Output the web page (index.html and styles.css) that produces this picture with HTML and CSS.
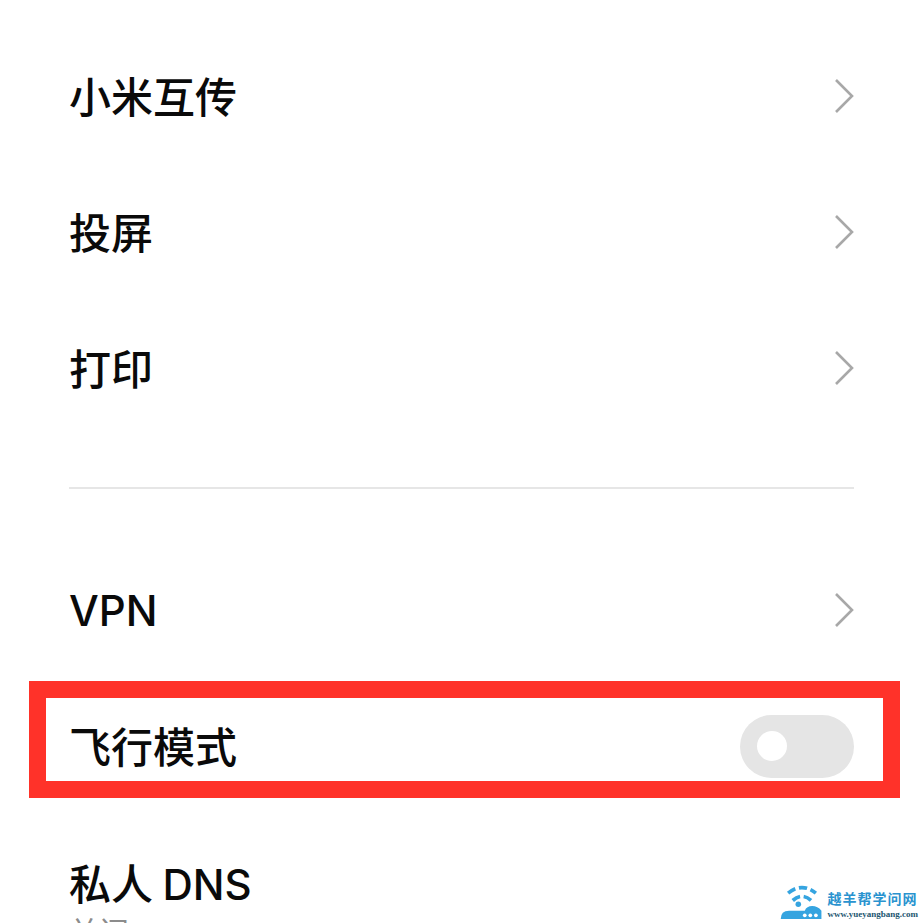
FILE: index.html
```html
<!doctype html>
<html lang="zh-CN">
    <head>
        <meta charset="UTF-8" />
        <meta name="viewport" content="width=device-width, initial-scale=1.0" />
        <title>更多连接方式</title>
        <link rel="stylesheet" href="styles.css">
    </head>
    <body>
        <div class="screen">
            <div class="group">
                <div class="row">
                    <span class="row-title">小米互传</span>
                    <svg class="chevron" viewBox="0 0 20 36"><path d="M2 2 L18 18 L2 34"></path></svg>
                </div>
                <div class="row">
                    <span class="row-title">投屏</span>
                    <svg class="chevron" viewBox="0 0 20 36"><path d="M2 2 L18 18 L2 34"></path></svg>
                </div>
                <div class="row">
                    <span class="row-title">打印</span>
                    <svg class="chevron" viewBox="0 0 20 36"><path d="M2 2 L18 18 L2 34"></path></svg>
                </div>
            </div>

            <div class="divider"></div>

            <div class="group">
                <div class="row">
                    <span class="row-title row-title-latin latin">VPN</span>
                    <svg class="chevron" viewBox="0 0 20 36"><path d="M2 2 L18 18 L2 34"></path></svg>
                </div>
                <div class="row row-marked">
                    <span class="row-title">飞行模式</span>
                    <span class="switch"><span class="knob"></span></span>
                    <div class="highlight"></div>
                </div>
                <div class="row row-stacked">
                    <span class="row-title">私人 <span class="latin">DNS</span></span>
                    <span class="row-sub">关闭</span>
                </div>
            </div>

            <div class="watermark">
                <svg class="wm-logo" viewBox="0 0 46 40">
                    <path class="wm-arc" d="M8 12 Q23 0 38 12"></path>
                    <path class="wm-arc" d="M13 20 Q23 11 33 20"></path>
                    <circle class="wm-fill" cx="19" cy="24" r="3"></circle>
                    <path class="wm-fill" d="M0 40 Q0 31 9 31 L26 31 Q28 26 34 26 Q40 26 44 31 L44 40 Z"></path>
                    <circle class="wm-dot" cx="26" cy="36" r="2"></circle>
                    <circle class="wm-dot" cx="32" cy="36" r="2"></circle>
                    <circle class="wm-dot" cx="38" cy="36" r="2"></circle>
                </svg>
                <div class="wm-text">
                    <span class="wm-name">越羊帮学问网</span>
                    <span class="wm-url">www.yueyangbang.com</span>
                </div>
            </div>
        </div>
    </body>
</html>
```

FILE: styles.css
```css
* {
    box-sizing: border-box;
}

html,
body {
    margin: 0;
    height: 100%;
    background: #fff;
}

body {
    font-family: "Noto Sans CJK SC", "Noto Sans", sans-serif;
    color: #0a0a0a;
    overflow: hidden;
}

.screen {
    position: relative;
    height: 923px;
    padding: 28px 69px 0;
    overflow: hidden;
}

.row {
    position: relative;
    display: flex;
    align-items: center;
    justify-content: space-between;
    height: 136px;
}

.row-title {
    margin-bottom: 2px;
    font-size: 42px;
    font-weight: 500;
    line-height: 1.2;
}

.row-title-latin {
    margin: 2px 0 0;
}

.latin {
    font-family: Inter, "Noto Sans", sans-serif;
}

.chevron {
    width: 20px;
    height: 36px;
    fill: none;
    stroke: #a8a8a8;
    stroke-width: 2.6;
}

.divider {
    height: 2px;
    margin: 51px 0 53px;
    background: #e6e6e6;
}

.switch {
    display: flex;
    align-items: center;
    width: 114px;
    height: 63px;
    padding-left: 17px;
    border-radius: 32px;
    background: #e5e5e5;
}

.knob {
    width: 30px;
    height: 30px;
    border-radius: 50%;
    background: #fff;
}

.highlight {
    position: absolute;
    top: 3px;
    left: -40px;
    width: 871px;
    height: 117px;
    border: 17px solid #ff3229;
}

.row-stacked {
    flex-direction: column;
    align-items: flex-start;
    justify-content: flex-start;
    padding-top: 43px;
}

.row-sub {
    margin-top: 0;
    font-size: 30px;
    line-height: 1.2;
    color: #8c8c8c;
}

.watermark {
    position: absolute;
    right: 5px;
    bottom: 4px;
    display: flex;
    align-items: flex-end;
    gap: 3px;
}

.wm-logo {
    width: 44px;
    height: 37px;
}

.wm-arc {
    fill: none;
    stroke: #35a4e0;
    stroke-width: 4;
    stroke-dasharray: 9 4;
}

.wm-fill {
    fill: #35a4e0;
}

.wm-dot {
    fill: #fff;
}

.wm-text {
    display: flex;
    flex-direction: column;
    gap: 2px;
}

.wm-name {
    font-size: 14px;
    font-weight: 700;
    line-height: 18px;
    letter-spacing: 1px;
    color: #2a93cf;
}

.wm-url {
    font-family: "Liberation Serif", serif;
    font-size: 9px;
    font-weight: 700;
    line-height: 10px;
    color: #23566f;
}
```
